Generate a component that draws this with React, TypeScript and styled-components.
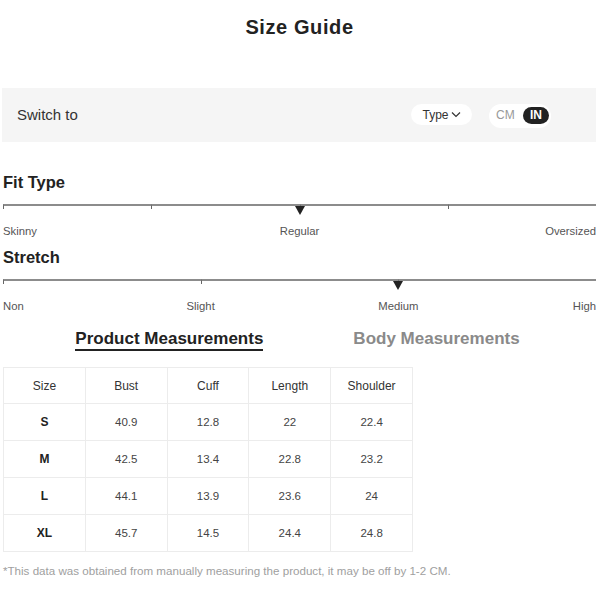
import React from "react";
import styled, { createGlobalStyle } from "styled-components";

const GlobalStyle = createGlobalStyle`
  html, body { margin: 0; padding: 0; background: #ffffff; }
  body { font-family: "Liberation Sans", Arial, sans-serif; color: #222; }
  * { box-sizing: border-box; }
`;

const Page = styled.div`
  width: 600px;
  padding: 0 4px 0 3px;
`;

const Title = styled.h1`
  margin: 0;
  height: 54px;
  line-height: 54px;
  text-align: center;
  font-size: 20px;
  font-weight: 700;
  letter-spacing: 0.6px;
  color: #222;
`;

const SwitchBar = styled.div`
  margin: 34px 0 0 -1px;
  height: 54px;
  background: #f5f5f5;
  display: flex;
  align-items: center;
  padding: 0 45px 0 15px;
`;

const SwitchLabel = styled.span`
  font-size: 15px;
  color: #333;
  flex: 1;
  margin-top: -1px;
`;

const TypePill = styled.div`
  height: 21px;
  width: 61px;
  border-radius: 11px;
  background: #fff;
  display: flex;
  align-items: center;
  justify-content: center;
  gap: 2px;
  font-size: 12px;
  color: #333;
  margin-right: 17px;
  margin-top: -1px;
`;

const UnitToggle = styled.div`
  height: 24px;
  width: 62px;
  border-radius: 12px;
  background: #fff;
  display: flex;
  align-items: center;
  justify-content: space-between;
  padding: 0 2px 0 7px;
  margin-top: 1px;
`;

const UnitOption = styled.span<{ $active?: boolean }>`
  font-size: 12px;
  height: 17px;
  line-height: 17px;
  padding: 0 ${(p) => (p.$active ? "7px" : "0")};
  border-radius: 9px;
  color: ${(p) => (p.$active ? "#fff" : "#999")};
  background: ${(p) => (p.$active ? "#222" : "transparent")};
  font-weight: ${(p) => (p.$active ? 700 : 400)};
`;

const ScaleBlock = styled.section<{ $first?: boolean }>`
  margin-top: ${(p) => (p.$first ? "30px" : "9px")};
`;

const ScaleTitle = styled.h2`
  margin: 0 0 12px 0;
  font-size: 16.5px;
  line-height: 20px;
  font-weight: 700;
  color: #222;
`;

const Track = styled.div<{ $segments: number }>`
  position: relative;
  display: grid;
  grid-template-columns: repeat(${(p) => p.$segments}, 1fr);
  height: 5px;
`;

const Segment = styled.div`
  border-top: 2px solid #8c8c8c;
  border-left: 1px solid #666;
  &:last-child {
    border-right: 1px solid #666;
  }
`;

const Marker = styled.div`
  position: absolute;
  top: 2px;
  width: 0;
  height: 0;
  transform: translateX(-50%);
  border-left: 5.5px solid transparent;
  border-right: 5.5px solid transparent;
  border-top: 9px solid #222;
`;

const LabelRow = styled.div<{ $segments: number }>`
  display: grid;
  grid-template-columns: repeat(${(p) => p.$segments * 2}, 1fr);
  margin-top: 15px;
  height: 14px;
`;

const ScaleLabel = styled.span<{ $col: string; $align: string }>`
  grid-row: 1;
  grid-column: ${(p) => p.$col};
  justify-self: ${(p) => p.$align};
  font-size: 11.3px;
  line-height: 14px;
  color: #555;
  white-space: nowrap;
`;

const Tabs = styled.div`
  display: flex;
  justify-content: center;
  gap: 90px;
  margin-top: 16px;
  padding-right: 4px;
`;

const Tab = styled.span<{ $active?: boolean }>`
  font-size: 17px;
  line-height: 20px;
  font-weight: 700;
  color: ${(p) => (p.$active ? "#222" : "#8a8a8a")};
  border-bottom: 2px solid ${(p) => (p.$active ? "#222" : "transparent")};
`;

const Table = styled.table`
  margin-top: 16px;
  border-collapse: collapse;
  table-layout: fixed;
  width: 410px;
`;

const HeadRow = styled.tr`
  height: 36px;
`;

const BodyRow = styled.tr`
  height: 37px;
`;

const HeadCell = styled.th`
  border: 1px solid #ececec;
  font-size: 12px;
  font-weight: 400;
  color: #333;
  text-align: center;
  padding: 0;
`;

const Cell = styled.td<{ $strong?: boolean }>`
  border: 1px solid #ececec;
  font-size: ${(p) => (p.$strong ? "12px" : "11.5px")};
  font-weight: ${(p) => (p.$strong ? 700 : 400)};
  color: ${(p) => (p.$strong ? "#222" : "#444")};
  text-align: center;
  padding: 0;
`;

const Note = styled.p`
  margin: 12px 0 0 0;
  font-size: 11.6px;
  line-height: 14px;
  color: #a0a0a0;
`;

type Label = { text: string; pos: number };

function Scale({
  title,
  segments,
  marker,
  labels,
  first,
}: {
  title: string;
  segments: number;
  marker: number;
  labels: Label[];
  first?: boolean;
}) {
  const place = (pos: number) => {
    if (pos === 0) return { col: "1 / span 1", align: "start" };
    if (pos === segments) return { col: `${segments * 2} / span 1`, align: "end" };
    return { col: `${pos * 2} / span 2`, align: "center" };
  };
  return (
    <ScaleBlock $first={first}>
      <ScaleTitle>{title}</ScaleTitle>
      <Track $segments={segments}>
        {Array.from({ length: segments }).map((_, i) => (
          <Segment key={i} />
        ))}
        <Marker style={{ left: `${(marker / segments) * 100}%` }} />
      </Track>
      <LabelRow $segments={segments}>
        {labels.map((l) => {
          const p = place(l.pos);
          return (
            <ScaleLabel key={l.text} $col={p.col} $align={p.align}>
              {l.text}
            </ScaleLabel>
          );
        })}
      </LabelRow>
    </ScaleBlock>
  );
}

const rows = [
  ["S", "40.9", "12.8", "22", "22.4"],
  ["M", "42.5", "13.4", "22.8", "23.2"],
  ["L", "44.1", "13.9", "23.6", "24"],
  ["XL", "45.7", "14.5", "24.4", "24.8"],
];

export default function App() {
  return (
    <>
      <GlobalStyle />
      <Page>
        <Title>Size Guide</Title>
        <SwitchBar>
          <SwitchLabel>Switch to</SwitchLabel>
          <TypePill>
            Type
            <svg width="10" height="7" viewBox="0 0 10 7" fill="none">
              <polyline points="1,1.5 5,5.5 9,1.5" stroke="#333" strokeWidth="1.2" />
            </svg>
          </TypePill>
          <UnitToggle>
            <UnitOption>CM</UnitOption>
            <UnitOption $active>IN</UnitOption>
          </UnitToggle>
        </SwitchBar>

        <Scale
          first
          title="Fit Type"
          segments={4}
          marker={2}
          labels={[
            { text: "Skinny", pos: 0 },
            { text: "Regular", pos: 2 },
            { text: "Oversized", pos: 4 },
          ]}
        />
        <Scale
          title="Stretch"
          segments={3}
          marker={2}
          labels={[
            { text: "Non", pos: 0 },
            { text: "Slight", pos: 1 },
            { text: "Medium", pos: 2 },
            { text: "High", pos: 3 },
          ]}
        />

        <Tabs>
          <Tab $active>Product Measurements</Tab>
          <Tab>Body Measurements</Tab>
        </Tabs>

        <Table>
          <thead>
            <HeadRow>
              {["Size", "Bust", "Cuff", "Length", "Shoulder"].map((h) => (
                <HeadCell key={h}>{h}</HeadCell>
              ))}
            </HeadRow>
          </thead>
          <tbody>
            {rows.map((r) => (
              <BodyRow key={r[0]}>
                {r.map((v, i) => (
                  <Cell key={i} $strong={i === 0}>
                    {v}
                  </Cell>
                ))}
              </BodyRow>
            ))}
          </tbody>
        </Table>

        <Note>*This data was obtained from manually measuring the product, it may be off by 1-2 CM.</Note>
      </Page>
    </>
  );
}
